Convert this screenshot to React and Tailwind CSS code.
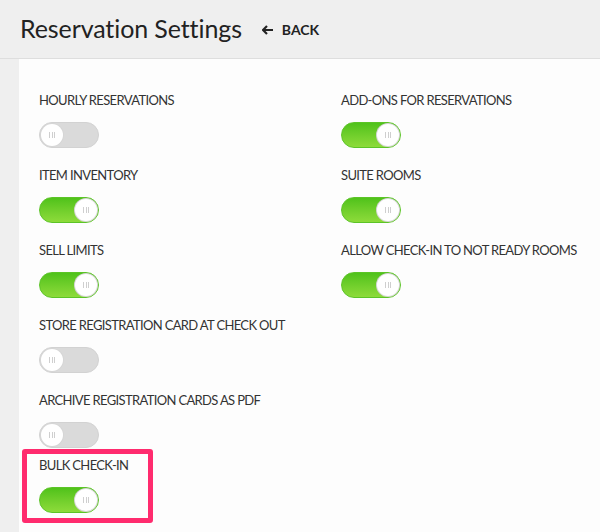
import React from "react";

function Toggle({ on }) {
  return (
    <div
      className={
        "relative h-[26px] w-[60px] rounded-full border " +
        (on
          ? "border-[#5cc427] bg-gradient-to-b from-[#4fc21a] to-[#8ddb3a]"
          : "border-[#d2d2d2] bg-[#dadada]")
      }
    >
      <div
        className={
          "absolute top-[1px] flex h-[22px] w-[22px] items-center justify-center rounded-full bg-white shadow-[0_0_0_1px_#d6d6d6] " +
          (on ? "right-[1px]" : "left-[1px]")
        }
      >
        <div className="flex gap-[1.5px]">
          <span className="h-[6px] w-[1px] bg-[#cfcfcf]" />
          <span className="h-[6px] w-[1px] bg-[#cfcfcf]" />
          <span className="h-[6px] w-[1px] bg-[#cfcfcf]" />
        </div>
      </div>
    </div>
  );
}

function Setting({ label, on }) {
  return (
    <div className="flex flex-col">
      <div className="h-[16px] whitespace-nowrap text-[13px] leading-[16px] tracking-[-0.65px] text-[#333]">{label}</div>
      <div className="mt-[14px]">
        <Toggle on={on} />
      </div>
    </div>
  );
}

export default function App() {
  return (
    <div
      className="h-[532px] w-[600px] overflow-hidden bg-[#efefef]"
      style={{ fontFamily: "Lato, 'Noto Sans', sans-serif" }}
    >
      <div className="flex h-[59px] items-center gap-[20px] border-b border-[#dedede] pl-[20px] pb-[1px]">
        <h1 className="text-[25px] font-normal tracking-[-0.1px] text-[#222]">Reservation Settings</h1>
        <div className="mt-[2px] flex items-center gap-[9px] text-[14px] font-bold text-[#222]">
          <svg width="11" height="10" viewBox="0 0 11 10">
            <path d="M5 1 L1 5 L5 9 M1 5 H11" stroke="#222" strokeWidth="2.2" fill="none" />
          </svg>
          <span>BACK</span>
        </div>
      </div>
      <div className="ml-[19px] h-full bg-[#fdfdfd] pl-[20px] pt-[33px]">
        <div className="grid grid-cols-[302px_1fr] gap-y-[19px]">
          <Setting label="HOURLY RESERVATIONS" on={false} />
          <Setting label="ADD-ONS FOR RESERVATIONS" on={true} />
          <Setting label="ITEM INVENTORY" on={true} />
          <Setting label="SUITE ROOMS" on={true} />
          <Setting label="SELL LIMITS" on={true} />
          <Setting label="ALLOW CHECK-IN TO NOT READY ROOMS" on={true} />
          <Setting label="STORE REGISTRATION CARD AT CHECK OUT" on={false} />
          <div />
          <Setting label="ARCHIVE REGISTRATION CARDS AS PDF" on={false} />
          <div />
        </div>
        <div className="relative mt-[9px] w-fit">
          <Setting label="BULK CHECK-IN" on={true} />
          <div className="absolute left-[-17px] top-[-8px] h-[74px] w-[131px] rounded-[3px] border-[5px] border-[#ff2b6e]" />
        </div>
      </div>
    </div>
  );
}
